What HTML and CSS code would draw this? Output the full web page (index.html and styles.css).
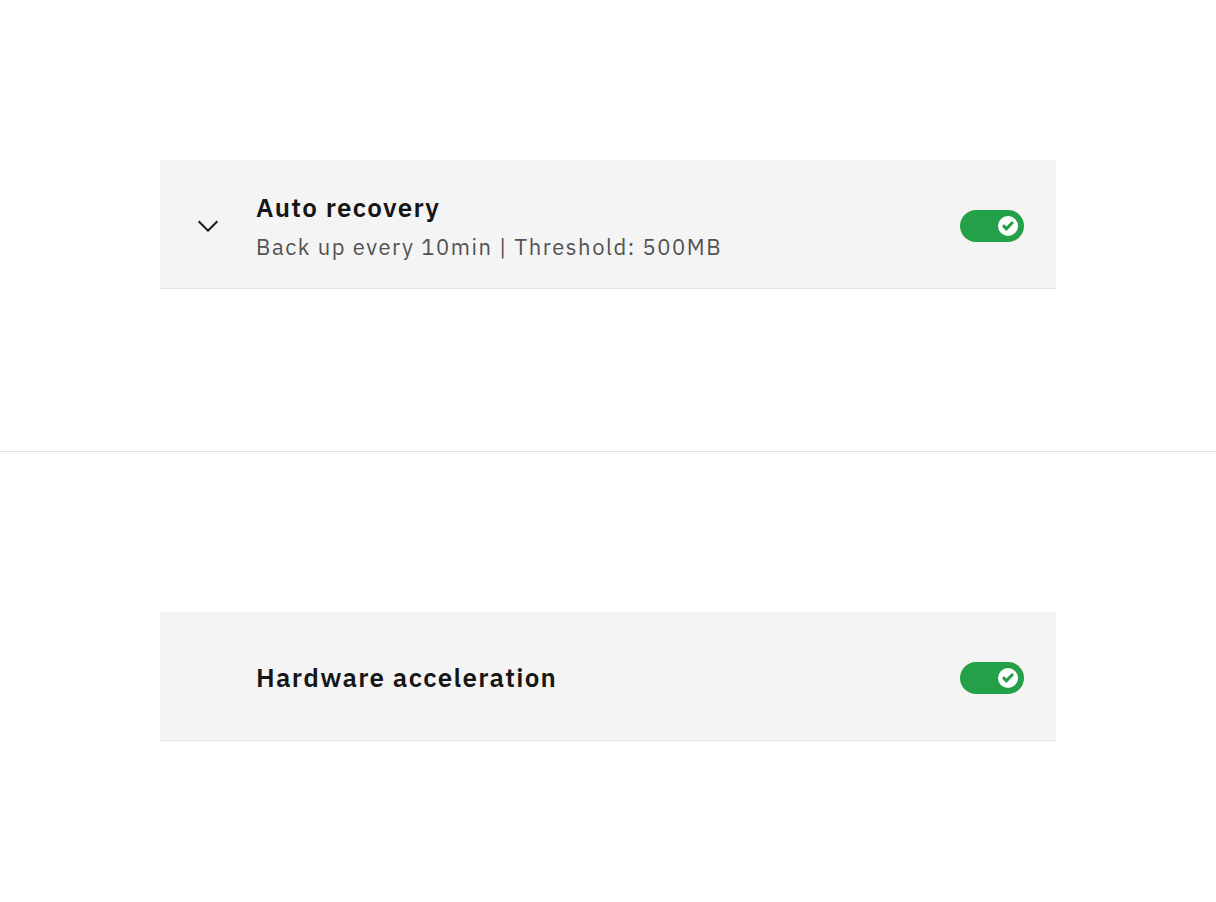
FILE: index.html
```html
<!DOCTYPE html>
<html lang="en">
<head>
<meta charset="utf-8">
<title>Settings</title>
<link rel="stylesheet" href="styles.css">
</head>
<body>
<section class="stage stage-first">
  <div class="item">
    <span class="chevron">
      <svg width="32" height="32" viewBox="0 0 16 16"><path d="M8 11L3 6 3.7 5.3 8 9.6 12.3 5.3 13 6z" fill="#161616"/></svg>
    </span>
    <div class="text">
      <div class="title">Auto recovery</div>
      <div class="subtitle">Back up every 10min | Threshold: 500MB</div>
    </div>
    <span class="toggle">
      <span class="knob">
        <svg width="12" height="10" viewBox="0 0 6 5"><path d="M2.2 2.7L5 0 6 1 2.2 5 0 2.7 1 1.5z" fill="#24a148"/></svg>
      </span>
    </span>
  </div>
</section>
<section class="stage">
  <div class="item">
    <span class="chevron-space"></span>
    <div class="text text-single">
      <div class="title">Hardware acceleration</div>
    </div>
    <span class="toggle">
      <span class="knob">
        <svg width="12" height="10" viewBox="0 0 6 5"><path d="M2.2 2.7L5 0 6 1 2.2 5 0 2.7 1 1.5z" fill="#24a148"/></svg>
      </span>
    </span>
  </div>
</section>
</body>
</html>
```
FILE: styles.css
```css
* { box-sizing: border-box; }
html, body { margin: 0; padding: 0; background: #ffffff; }
body {
  font-family: "IBM Plex Sans", Inter, "Noto Sans", sans-serif;
  color: #161616;
}
.stage {
  height: 450px;
  padding: 160px 160px 0;
}
.stage-first {
  height: 452px;
  border-bottom: 1px solid #e0e0e0;
}
.item {
  width: 896px;
  height: 129px;
  background: #f4f4f4;
  border-bottom: 1px solid #e0e0e0;
  display: flex;
  align-items: center;
  padding: 4px 32px 0;
  gap: 32px;
}
.chevron, .chevron-space {
  width: 32px;
  height: 32px;
  flex: none;
  display: flex;
}
.text {
  flex: 1;
  display: flex;
  flex-direction: column;
  margin-top: 2px;
}
.text-single {
  margin-top: -2px;
}
.title {
  font-size: 26px;
  font-weight: 600;
  line-height: 34px;
  letter-spacing: 1.3px;
  color: #161616;
}
.subtitle {
  font-size: 22px;
  font-weight: 400;
  line-height: 34px;
  letter-spacing: 1.55px;
  color: #525252;
  margin-top: 6px;
}
.toggle {
  width: 64px;
  height: 32px;
  border-radius: 16px;
  background: #24a148;
  flex: none;
  display: flex;
  align-items: center;
  justify-content: flex-end;
  padding-right: 6px;
}
.knob {
  width: 20px;
  height: 20px;
  border-radius: 50%;
  background: #ffffff;
  display: flex;
  align-items: center;
  justify-content: center;
}
.knob svg { display: block; }
```
